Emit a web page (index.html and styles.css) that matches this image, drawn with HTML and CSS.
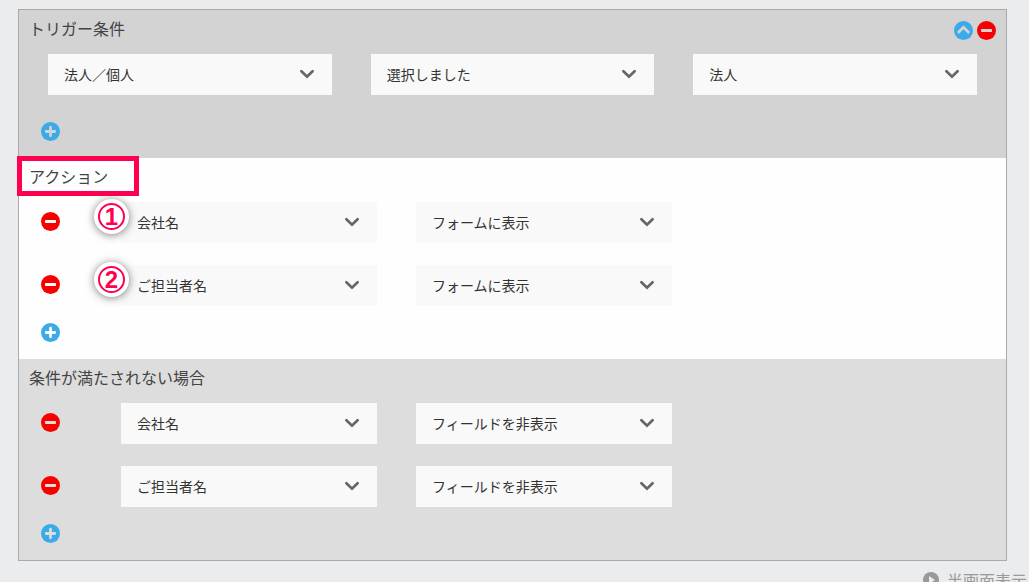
FILE: index.html
```html
<!DOCTYPE html>
<html lang="ja">
<head>
<meta charset="utf-8">
<title>トリガー条件</title>
<link rel="stylesheet" href="styles.css">
</head>
<body>
<svg class="sprite" aria-hidden="true">
  <symbol id="plus" viewBox="0 0 20 20"><circle cx="10" cy="10" r="10" fill="#3aaae8"/><path d="M10 5.500v9M5.500 10h9" fill="none" stroke="currentColor" stroke-width="2.900" stroke-linecap="round"/></symbol>
  <symbol id="minus" viewBox="0 0 20 20"><circle cx="10" cy="10" r="10" fill="#f80000"/><rect x="4.200" y="8.400" width="11.600" height="3.200" rx="0.800" fill="currentColor"/></symbol>
  <symbol id="up" viewBox="0 0 20 20"><circle cx="10" cy="10" r="10" fill="#3aaae8"/><path d="M5 11.700l5-5 5 5" fill="none" stroke="currentColor" stroke-width="3" stroke-linecap="round"/></symbol>
  <symbol id="chevron" viewBox="0 0 16 10"><path d="M2.400 2.200L8 7.600l5.600-5.400" fill="none" stroke="#666" stroke-width="2.700" stroke-linecap="round"/></symbol>
</svg>
<main class="panel">
  <section class="section trigger">
    <header class="head">
      <h2 class="title">トリガー条件</h2>
      <div class="tools">
        <button class="icon" aria-label="折りたたむ"><svg><use href="#up"/></svg></button>
        <button class="icon" aria-label="条件を削除"><svg><use href="#minus"/></svg></button>
      </div>
    </header>
    <div class="fields">
      <div class="field"><select aria-label="項目"><option>法人／個人</option></select><svg class="chevron"><use href="#chevron"/></svg></div>
      <div class="field"><select aria-label="条件"><option>選択しました</option></select><svg class="chevron"><use href="#chevron"/></svg></div>
      <div class="field"><select aria-label="値"><option>法人</option></select><svg class="chevron"><use href="#chevron"/></svg></div>
    </div>
    <div class="add"><button class="icon" aria-label="条件を追加"><svg><use href="#plus"/></svg></button></div>
  </section>

  <section class="section action">
    <header class="head">
      <h2 class="title">アクション</h2>
      <span class="highlight"></span>
    </header>
    <div class="rows">
      <div class="row">
        <button class="icon" aria-label="アクションを削除"><svg><use href="#minus"/></svg></button>
        <span class="badge"><span class="ring">1</span></span>
        <div class="fields">
          <div class="field"><select aria-label="項目"><option>会社名</option></select><svg class="chevron"><use href="#chevron"/></svg></div>
          <div class="field"><select aria-label="動作"><option>フォームに表示</option></select><svg class="chevron"><use href="#chevron"/></svg></div>
        </div>
      </div>
      <div class="row">
        <button class="icon" aria-label="アクションを削除"><svg><use href="#minus"/></svg></button>
        <span class="badge"><span class="ring">2</span></span>
        <div class="fields">
          <div class="field"><select aria-label="項目"><option>ご担当者名</option></select><svg class="chevron"><use href="#chevron"/></svg></div>
          <div class="field"><select aria-label="動作"><option>フォームに表示</option></select><svg class="chevron"><use href="#chevron"/></svg></div>
        </div>
      </div>
    </div>
    <div class="add"><button class="icon" aria-label="アクションを追加"><svg><use href="#plus"/></svg></button></div>
  </section>

  <section class="section otherwise">
    <header class="head"><h2 class="title">条件が満たされない場合</h2></header>
    <div class="rows">
      <div class="row">
        <button class="icon" aria-label="アクションを削除"><svg><use href="#minus"/></svg></button>
        <div class="fields">
          <div class="field"><select aria-label="項目"><option>会社名</option></select><svg class="chevron"><use href="#chevron"/></svg></div>
          <div class="field"><select aria-label="動作"><option>フィールドを非表示</option></select><svg class="chevron"><use href="#chevron"/></svg></div>
        </div>
      </div>
      <div class="row">
        <button class="icon" aria-label="アクションを削除"><svg><use href="#minus"/></svg></button>
        <div class="fields">
          <div class="field"><select aria-label="項目"><option>ご担当者名</option></select><svg class="chevron"><use href="#chevron"/></svg></div>
          <div class="field"><select aria-label="動作"><option>フィールドを非表示</option></select><svg class="chevron"><use href="#chevron"/></svg></div>
        </div>
      </div>
    </div>
    <div class="add"><button class="icon" aria-label="アクションを追加"><svg><use href="#plus"/></svg></button></div>
  </section>
</main>
<footer class="footer">
  <a class="half" href="#"><svg viewBox="0 0 16 16" aria-hidden="true"><circle cx="8" cy="8" r="8" fill="#999"/><path d="M6 4l6 4-6 4z" fill="#ebecee"/></svg>半画面表示</a>
</footer>
</body>
</html>
```
FILE: styles.css
```css
* {
  box-sizing: border-box;
}

body {
  margin: 0;
  height: 100vh;
  overflow: hidden;
  background: #ebecee;
  color: #444;
  font: 16px/24px "Noto Sans CJK JP", sans-serif;
}

.sprite {
  position: absolute;
  width: 0;
  height: 0;
}

.panel {
  margin: 9px 22px 0 18px;
  border: 1px solid #aaa;
}

.section {
  padding-bottom: 17px;
}

.trigger {
  background: #d3d3d3;
  color: #d3d3d3;
}

.action {
  background: #fefefe;
  color: #fff;
}

.otherwise {
  background: #ddd;
  color: #ddd;
}

.head {
  position: relative;
  display: flex;
  justify-content: space-between;
  align-items: flex-start;
  height: 38px;
  margin-bottom: 6px;
  padding: 0 10px;
}

.title {
  margin: 0;
  color: #444;
  font-size: 16px;
  font-weight: 400;
  line-height: 36px;
}

.tools {
  display: flex;
  gap: 4px;
  padding-top: 11px;
}

.icon {
  display: block;
  flex: none;
  width: 19px;
  height: 19px;
  padding: 0;
  border: 0;
  background: none;
  color: inherit;
  cursor: pointer;
}

.icon svg {
  display: block;
  width: 100%;
  height: 100%;
}

.fields {
  display: grid;
  grid-template-columns: repeat(3, 1fr);
  gap: 39px;
  flex: 1;
}

.trigger .fields {
  margin: 0 29px;
}

.rows {
  display: grid;
  gap: 22px;
}

.row {
  position: relative;
  display: flex;
  align-items: flex-start;
  gap: 61px;
  padding: 0 39px 0 22px;
}

.row .icon {
  margin-top: 10px;
}

.field {
  display: grid;
  align-items: center;
}

.field > * {
  grid-area: 1 / 1;
}

.field select {
  width: 100%;
  height: 41px;
  padding: 0 16px 2px;
  border: 0;
  border-radius: 0;
  appearance: none;
  background: #f9f9f9;
  color: #333;
  font: 14px/20px "Noto Sans CJK JP", sans-serif;
}

.chevron {
  justify-self: end;
  width: 16px;
  height: 10px;
  margin: 0 17px 2px 0;
  pointer-events: none;
}

.add {
  padding: 17px 22px 0;
}

.trigger .add {
  padding-top: 27px;
}

.highlight {
  position: absolute;
  top: -2px;
  left: -2px;
  width: 122px;
  height: 40px;
  border: 5px solid #ff0050;
}

.badge {
  position: absolute;
  top: -3px;
  left: 75px;
  display: grid;
  place-items: center;
  width: 35px;
  height: 35px;
  border-radius: 50%;
  background: #fff;
  box-shadow: 0 1px 8px rgba(0, 0, 0, 0.5);
}

.ring {
  width: 27px;
  height: 27px;
  border: 2px solid #ff0050;
  border-radius: 50%;
  color: #ff0050;
  font: 700 24px/24px "Liberation Sans", sans-serif;
  text-align: center;
}

.footer {
  display: flex;
  justify-content: flex-end;
  padding: 7px 2px 0;
}

.half {
  display: flex;
  align-items: center;
  gap: 8px;
  color: #999;
  text-decoration: none;
}

.half svg {
  width: 16px;
  height: 16px;
}
```
